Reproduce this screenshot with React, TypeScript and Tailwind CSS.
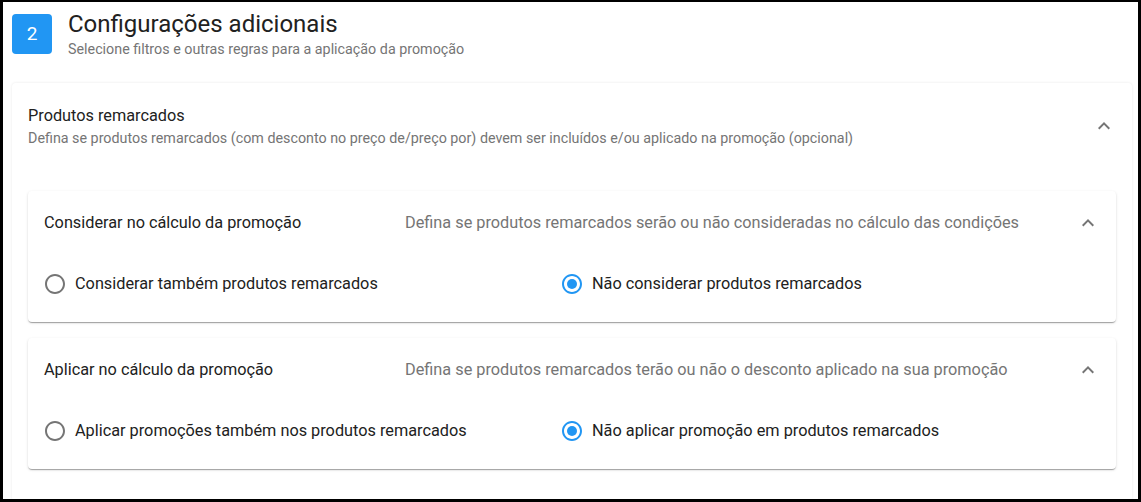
import React, { useState } from 'react'

type Option = { id: string; label: string }

type Section = {
  id: string
  title: string
  description: string
  options: Option[]
  selected: string
}

const sections: Section[] = [
  {
    id: 'considerar',
    title: 'Considerar no cálculo da promoção',
    description:
      'Defina se produtos remarcados serão ou não consideradas no cálculo das condições',
    options: [
      { id: 'sim', label: 'Considerar também produtos remarcados' },
      { id: 'nao', label: 'Não considerar produtos remarcados' },
    ],
    selected: 'nao',
  },
  {
    id: 'aplicar',
    title: 'Aplicar no cálculo da promoção',
    description:
      'Defina se produtos remarcados terão ou não o desconto aplicado na sua promoção',
    options: [
      { id: 'sim', label: 'Aplicar promoções também nos produtos remarcados' },
      { id: 'nao', label: 'Não aplicar promoção em produtos remarcados' },
    ],
    selected: 'nao',
  },
]

function ExpandLess() {
  return (
    <svg viewBox="0 0 24 24" className="w-6 h-6 shrink-0 fill-[#757575]">
      <path d="M12 8l-6 6 1.41 1.41L12 10.83l4.59 4.58L18 14z" />
    </svg>
  )
}

function RadioIcon({ checked }: { checked: boolean }) {
  return (
    <svg
      viewBox="0 0 24 24"
      className={
        checked ? 'w-6 h-6 shrink-0 fill-[#2196f3]' : 'w-6 h-6 shrink-0 fill-[#757575]'
      }
    >
      <path d="M12 2C6.48 2 2 6.48 2 12s4.48 10 10 10 10-4.48 10-10S17.52 2 12 2zm0 18c-4.42 0-8-3.58-8-8s3.58-8 8-8 8 3.58 8 8-3.58 8-8 8z" />
      {checked && <circle cx="12" cy="12" r="5" />}
    </svg>
  )
}

function SectionCard({ section }: { section: Section }) {
  const [value, setValue] = useState(section.selected)

  return (
    <div className="bg-white rounded shadow-[0_2px_1px_-1px_rgba(0,0,0,0.2),0_1px_1px_0_rgba(0,0,0,0.14),0_1px_3px_0_rgba(0,0,0,0.12)]">
      <div className="flex items-center h-16 pl-4 pr-4">
        <div className="w-[361px] shrink-0 text-[16.3px] text-[#212121]">
          {section.title}
        </div>
        <div className="flex-1 text-[16.3px] text-[#757575]">
          {section.description}
        </div>
        <ExpandLess />
      </div>
      <div className="flex pl-[15px] pr-4 pt-2 pb-[17px]">
        {section.options.map((opt, i) => (
          <label
            key={opt.id}
            onClick={() => setValue(opt.id)}
            className={
              i === 0
                ? 'flex items-center gap-2 h-[42px] w-[517px] shrink-0 cursor-pointer'
                : 'flex items-center gap-2 h-[42px] cursor-pointer'
            }
          >
            <RadioIcon checked={value === opt.id} />
            <span className="text-[16.3px] text-[#212121]">{opt.label}</span>
          </label>
        ))}
      </div>
    </div>
  )
}

export default function App() {
  return (
    <div
      className="w-[1141px] h-[502px] overflow-hidden bg-white border-black border-l-[3px] border-t-2 border-r-[3px] border-b-[3px] pl-[9px] pr-[6px] pt-3"
      style={{ fontFamily: 'Roboto, "Liberation Sans", sans-serif' }}
    >
      <div className="flex items-start gap-4">
        <div className="w-10 h-10 rounded bg-[#2196f3] text-white text-[19px] flex items-center justify-center">
          2
        </div>
        <div className="-mt-[4px]">
          <div className="text-[24px] leading-[29px] text-[#212121]">
            Configurações adicionais
          </div>
          <div className="text-[14.3px] leading-5 text-[#757575]">
            Selecione filtros e outras regras para a aplicação da promoção
          </div>
        </div>
      </div>

      <div className="mt-[24px] bg-white rounded pb-8 shadow-[0_0_3px_rgba(0,0,0,0.09)]">
        <div className="flex items-center px-4 pt-[21px] pb-[19px]">
          <div className="flex-1">
            <div className="text-[16.3px] leading-6 text-[#212121]">
              Produtos remarcados
            </div>
            <div className="text-[14.3px] leading-5 text-[#757575]">
              Defina se produtos remarcados (com desconto no preço de/preço por)
              devem ser incluídos e/ou aplicado na promoção (opcional)
            </div>
          </div>
          <ExpandLess />
        </div>
        <div className="px-4 pt-6 flex flex-col gap-4">
          {sections.map((s) => (
            <SectionCard key={s.id} section={s} />
          ))}
        </div>
      </div>
    </div>
  )
}
